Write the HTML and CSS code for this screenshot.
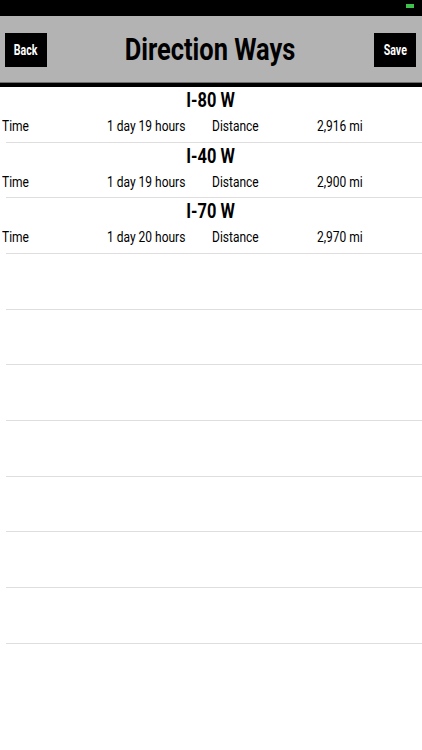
FILE: index.html
```html
<!DOCTYPE html>
<html lang="en">
<head>
<meta charset="utf-8">
<title>Direction Ways</title>
<link rel="stylesheet" href="styles.css">
</head>
<body>
<div class="status"><span class="battery"></span></div>
<header class="nav">
  <button class="btn"><span class="sq">Back</span></button>
  <h1 class="title"><span class="sq">Direction Ways</span></h1>
  <button class="btn"><span class="sq">Save</span></button>
</header>
<div class="rule"></div>
<ul class="list">
  <li class="item">
    <h2 class="route"><span class="sq">I-80 W</span></h2>
    <div class="stats"><span class="sq">Time</span><span class="sq">1 day 19 hours</span><span class="sq">Distance</span><span class="sq">2,916 mi</span></div>
  </li>
  <li class="item">
    <h2 class="route"><span class="sq">I-40 W</span></h2>
    <div class="stats"><span class="sq">Time</span><span class="sq">1 day 19 hours</span><span class="sq">Distance</span><span class="sq">2,900 mi</span></div>
  </li>
  <li class="item">
    <h2 class="route"><span class="sq">I-70 W</span></h2>
    <div class="stats"><span class="sq">Time</span><span class="sq">1 day 20 hours</span><span class="sq">Distance</span><span class="sq">2,970 mi</span></div>
  </li>
  <li class="item"></li>
  <li class="item"></li>
  <li class="item"></li>
  <li class="item"></li>
  <li class="item"></li>
  <li class="item"></li>
  <li class="item"></li>
</ul>
</body>
</html>
```
FILE: styles.css
```css
* { box-sizing: border-box; }
html, body { margin: 0; padding: 0; }
body {
  width: 422px;
  height: 750px;
  overflow: hidden;
  background: #fff;
  font-family: Roboto, "Liberation Sans", sans-serif;
  color: #000;
}
.sq {
  display: inline-block;
  transform: scaleX(0.82);
  white-space: nowrap;
}
.status {
  height: 16px;
  background: #000;
  display: flex;
  justify-content: flex-end;
  padding: 4px 8px 0 0;
}
.battery {
  width: 8px;
  height: 4px;
  background: #3fc14b;
}
.nav {
  height: 67px;
  background: #b3b3b3;
  border-bottom: 1px solid #6e6e6e;
  display: flex;
  align-items: center;
  justify-content: space-between;
  padding: 1px 6px 0 5px;
}
.btn {
  width: 42px;
  height: 34px;
  border: 0;
  background: #000;
  color: #fff;
  font-family: Roboto, "Liberation Sans", sans-serif;
  font-weight: 700;
  font-size: 14px;
  padding: 0;
  display: flex;
  align-items: center;
  justify-content: center;
}
.btn .sq { transform: scaleX(0.76); }
.title {
  margin: 0;
  font-size: 31px;
  font-weight: 700;
  line-height: 34px;
  text-align: center;
  flex: 1;
}
.rule {
  height: 4px;
  background: #000;
}
.list {
  list-style: none;
  margin: 0;
  padding: 0;
}
.item {
  height: 55.67px;
  border-bottom: 1px solid #dedede;
  margin-left: 6px;
  display: flex;
  flex-direction: column;
}
.route {
  margin: 0 0 0 -6px;
  font-size: 20px;
  font-weight: 700;
  line-height: 24px;
  text-align: center;
  padding-top: 1px;
}
.stats {
  margin: 4px 0 0 -6px;
  padding-left: 2px;
  display: grid;
  grid-template-columns: 105px 105px 105px 105px;
  font-size: 15px;
  line-height: 20px;
}
.stats .sq { transform: scaleX(0.8); transform-origin: left center; }
```
